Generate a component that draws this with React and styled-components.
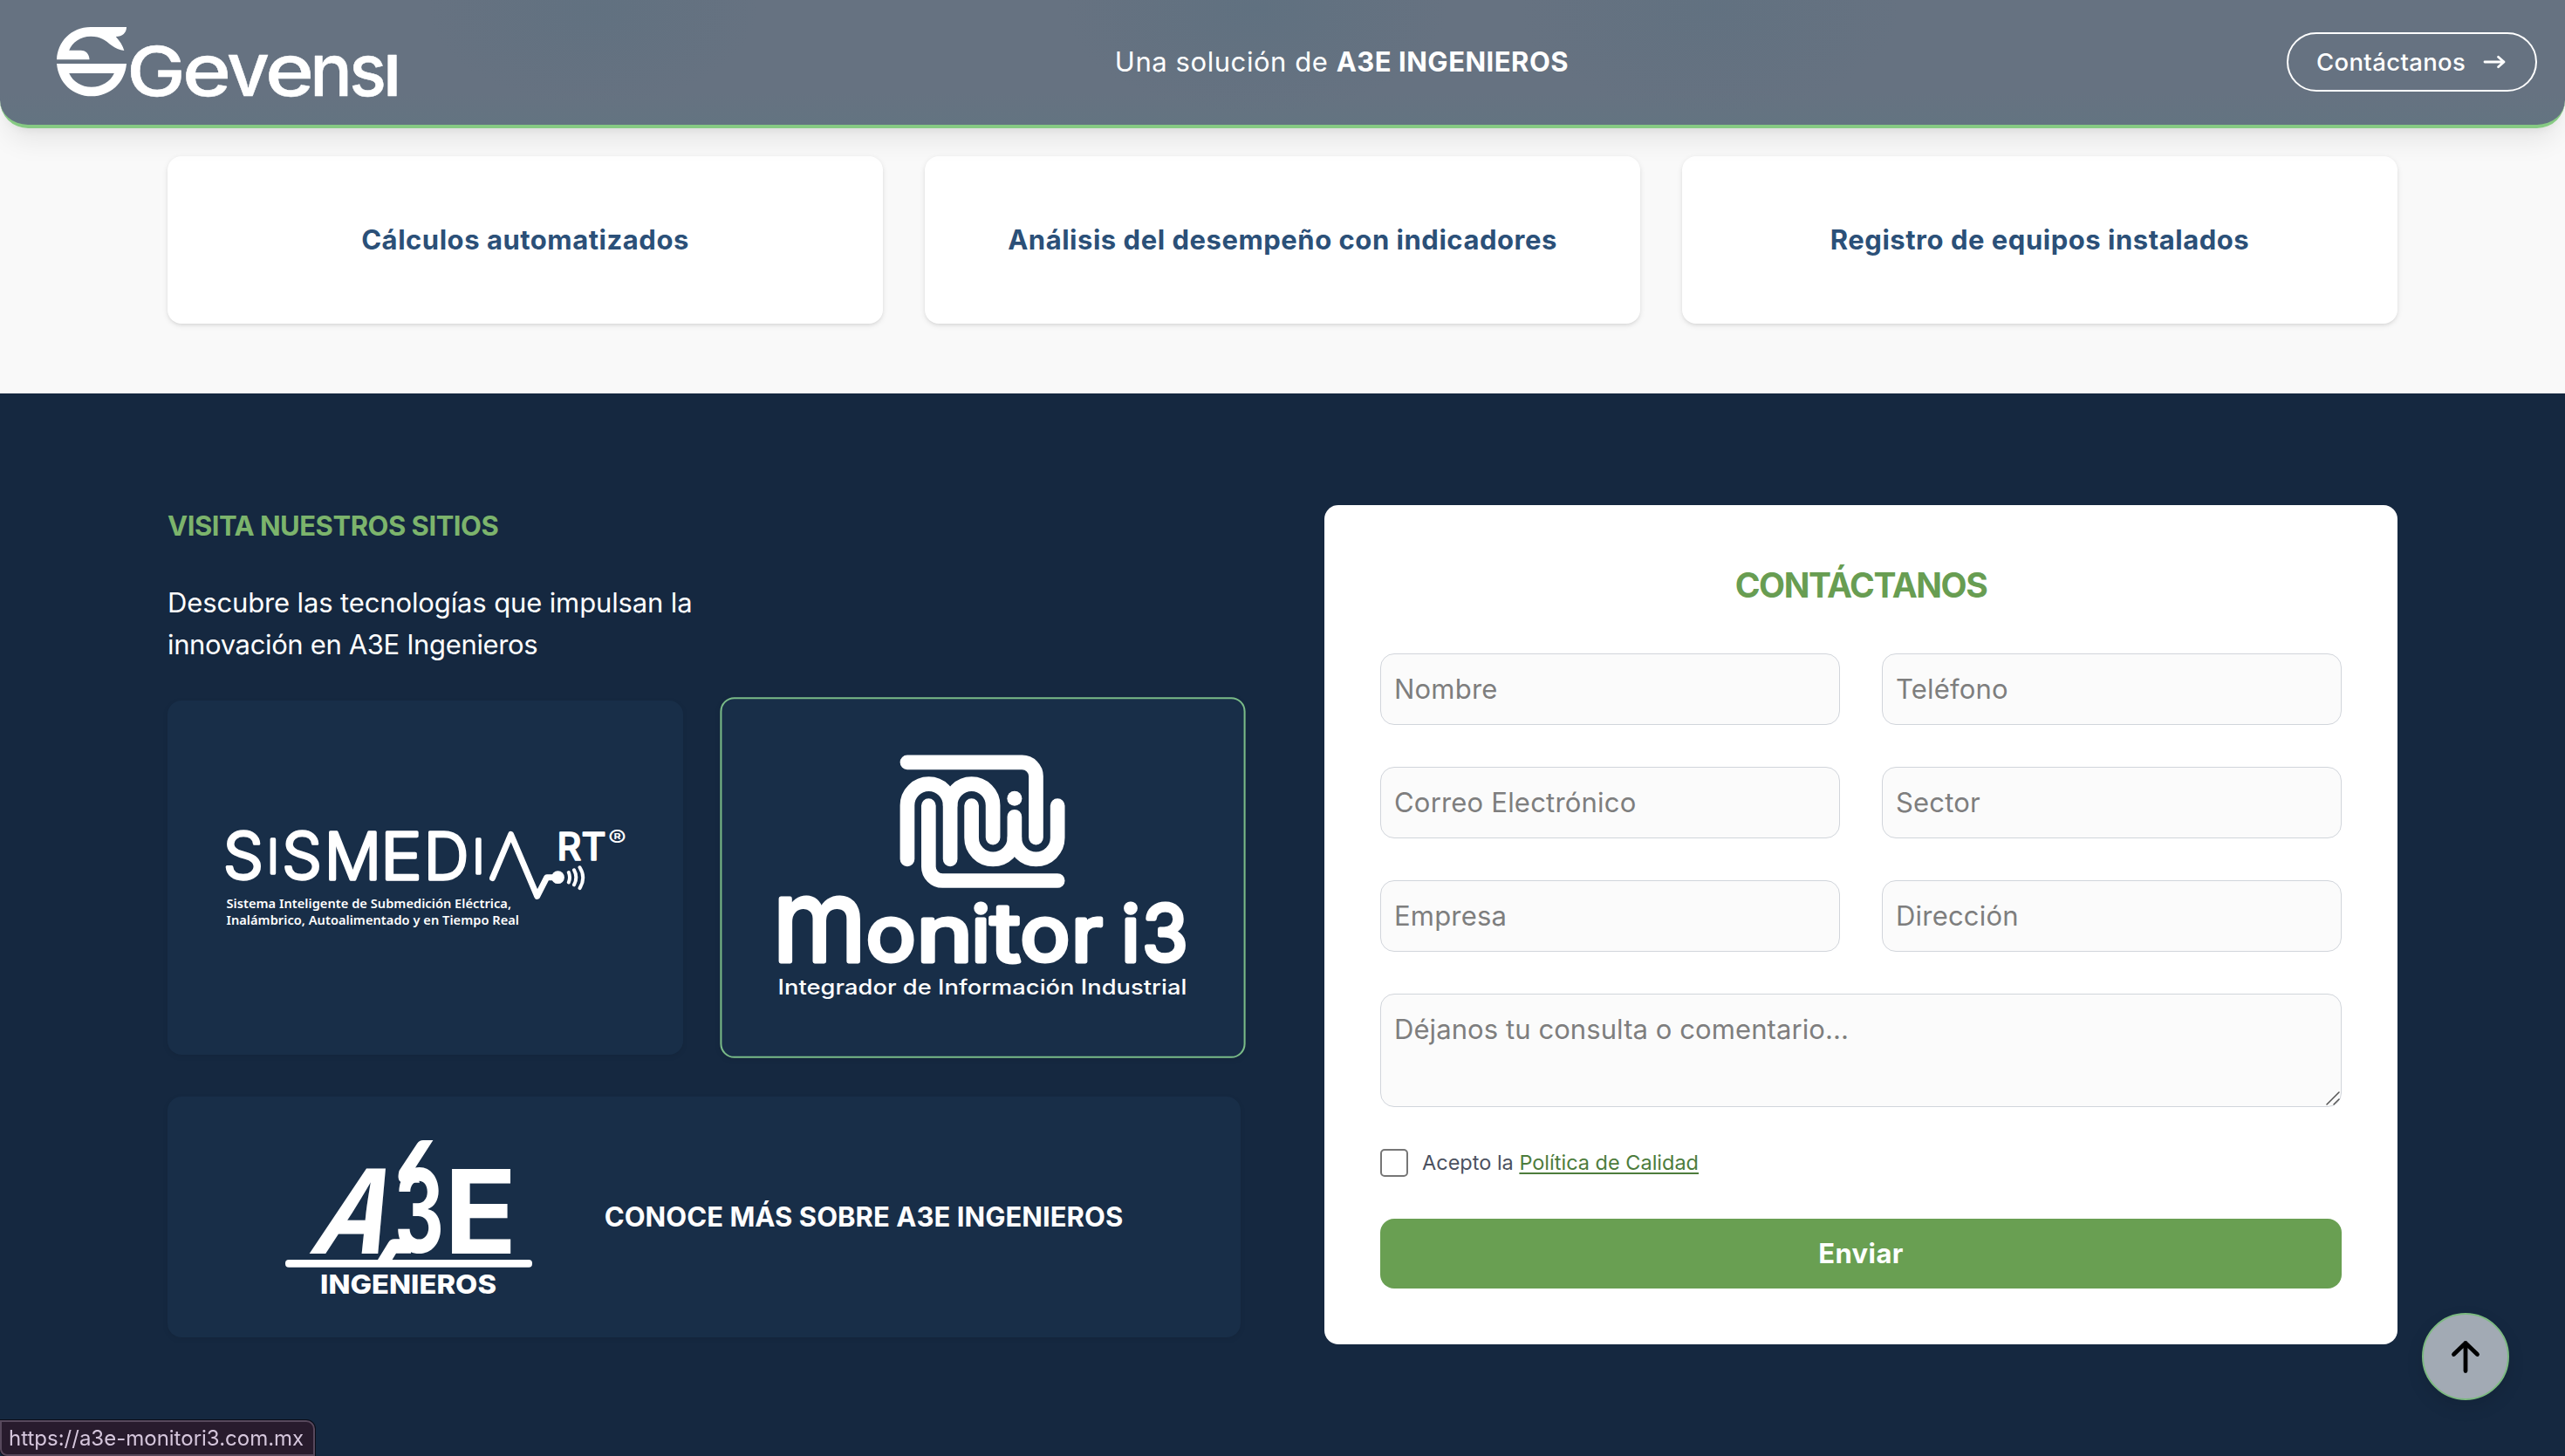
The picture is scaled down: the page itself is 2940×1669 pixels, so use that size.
import React from 'react';
import styled, { createGlobalStyle } from 'styled-components';

const GlobalStyle = createGlobalStyle`
  * { box-sizing: border-box; }
  body {
    margin: 0;
    background: #f9f9f9;
    font-family: Inter, 'DM Sans', sans-serif;
    font-size: 31px;
    line-height: 48px;
  }
  h2, h3, p { margin: 0; }
`;

const Page = styled.div`
  display: flex;
  flex-direction: column;
  height: 1669px;
  overflow: hidden;
`;

const Header = styled.header`
  position: relative;
  z-index: 2;
  flex: none;
  display: flex;
  align-items: center;
  justify-content: space-between;
  height: 147px;
  padding: 0 32px 1px 65px;
  color: #fff;
  background:
    radial-gradient(ellipse 190px 110px at 680px 10px, rgba(84, 110, 126, 0.28), transparent),
    radial-gradient(ellipse 220px 120px at 1440px 10px, rgba(84, 110, 126, 0.35), transparent),
    radial-gradient(ellipse 220px 120px at 1960px 10px, rgba(84, 110, 126, 0.25), transparent),
    linear-gradient(#667281 75%, #637481);
  border-bottom: 4px solid #86ca83;
  border-radius: 0 0 32px 32px;
  box-shadow: 0 20px 30px -6px rgba(0, 0, 0, 0.08), 0 8px 12px -8px rgba(0, 0, 0, 0.08);
`;

const Logo = styled.svg`
  display: block;
  flex: none;
  overflow: visible;
  fill: #fff;
  font-family: Inter, sans-serif;
`;

const Tagline = styled.p`
  white-space: pre;
  letter-spacing: 0.56px;
  strong { letter-spacing: 0.5px; font-weight: 700; }
`;

const ContactButton = styled.a`
  display: flex;
  align-items: center;
  gap: 20px;
  width: 287px;
  height: 68px;
  padding-left: 32px;
  border: 2px solid #fff;
  border-radius: 34px;
  font-size: 27.5px;
  font-weight: 500;
  letter-spacing: 0.35px;
`;

const Features = styled.section`
  flex: none;
  display: grid;
  grid-template-columns: repeat(3, 1fr);
  gap: 48px;
  padding: 32px 192px 80px;
`;

const FeatureCard = styled.div`
  display: flex;
  align-items: center;
  justify-content: center;
  height: 192px;
  border-radius: 16px;
  background: #fff;
  color: #2b5078;
  font-weight: 700;
  letter-spacing: 0.53px;
  box-shadow: 0 2px 6px rgba(0, 0, 0, 0.1), 0 2px 4px -2px rgba(0, 0, 0, 0.1);
`;

const Footer = styled.section`
  flex: 1;
  display: grid;
  grid-template-columns: 1fr 1fr;
  align-items: start;
  gap: 96px;
  padding: 128px 192px;
  background: #152840;
`;

const Sites = styled.div`
  display: flex;
  flex-direction: column;
  gap: 40px;
  color: #fff;
`;

const SitesTitle = styled.h3`
  color: #7cb46c;
  font-size: 31px;
  font-weight: 700;
  letter-spacing: -0.48px;
`;

const SitesText = styled.p`
  display: flex;
  flex-direction: column;
`;

const SitesLine = styled.span`
  letter-spacing: ${(p) => p.$spacing}px;
`;

const SiteGrid = styled.div`
  display: grid;
  grid-template-columns: 1fr 1fr;
  grid-template-rows: 406px 276px;
  gap: 48px;
`;

const SiteCard = styled.a`
  display: flex;
  align-items: center;
  justify-content: center;
  gap: 83px;
  grid-column: ${(p) => (p.$wide ? 'span 2' : 'auto')};
  border: ${(p) => (p.$active ? '2px solid #7abb88' : '0')};
  border-radius: 16px;
  background: #182e48;
  transform: ${(p) => (p.$active ? 'scale(1.019)' : 'none')};
  box-shadow: 0 2px 6px rgba(0, 0, 0, 0.08);
  font-weight: 700;
  letter-spacing: 0.04px;
`;

const Form = styled.form`
  display: flex;
  flex-direction: column;
  gap: 48px;
  padding: 64px;
  border-radius: 16px;
  background: #fff;
`;

const FormTitle = styled.h2`
  margin-bottom: 2px;
  color: #689d52;
  font-size: 39px;
  line-height: 56px;
  font-weight: 700;
  letter-spacing: -1.45px;
  text-align: center;
`;

const FieldGrid = styled.div`
  display: grid;
  grid-template-columns: 1fr 1fr;
  gap: 48px;
`;

const Input = styled.input`
  width: 100%;
  height: 82px;
  padding: 0 15px 2px;
  border: 1px solid #d1d5db;
  border-radius: 16px;
  background: #fbfbfb;
  font: inherit;
  letter-spacing: 0.2px;
  &::placeholder { color: #7e7e7e; opacity: 1; }
`;

const AreaWrap = styled.div`
  position: relative;
  height: 130px;
`;

const TextArea = styled.textarea`
  display: block;
  width: 100%;
  height: 130px;
  padding: 16px 15px 14px;
  border: 1px solid #d1d5db;
  border-radius: 16px;
  background: #fbfbfb;
  font: inherit;
  letter-spacing: 0.08px;
  resize: none;
  &::placeholder { color: #7e7e7e; opacity: 1; }
`;

const Grip = styled.svg`
  position: absolute;
  right: 2px;
  bottom: 2px;
`;

const Consent = styled.label`
  display: flex;
  align-items: center;
  gap: 16px;
  height: 32px;
  color: #4b5160;
  font-size: 23.5px;
  line-height: 32px;
  a {
    color: #4d7c3c;
    text-decoration: underline;
    text-decoration-thickness: 2px;
    text-underline-offset: 3px;
    text-decoration-skip-ink: none;
  }
`;

const CheckBox = styled.input`
  appearance: none;
  width: 32px;
  height: 32px;
  margin: 0;
  border: 2px solid #767676;
  border-radius: 5px;
  background: #fff;
`;

const Submit = styled.button`
  height: 80px;
  border: 0;
  border-radius: 16px;
  background: #699f52;
  color: #fff;
  font: inherit;
  font-weight: 700;
  letter-spacing: 0.4px;
`;

const TopButton = styled.button`
  position: fixed;
  z-index: 3;
  right: 64px;
  bottom: 64px;
  display: flex;
  align-items: center;
  justify-content: center;
  width: 100px;
  height: 100px;
  padding: 0;
  border: 2px solid #7cb980;
  border-radius: 50%;
  background: #a2aab4;
  box-shadow: 0 8px 20px rgba(0, 0, 0, 0.1);
`;

const LinkStatus = styled.div`
  position: fixed;
  z-index: 3;
  left: 0;
  bottom: 0;
  width: 361px;
  height: 41px;
  padding-left: 8px;
  border: 2px solid #57485c;
  border-radius: 0 10px 0 8px;
  background: #281b2d;
  box-shadow: 0 0 0 1px #0a0d18;
  color: #d5c6dc;
  font-size: 24px;
  line-height: 37px;
`;

/* Left bearing, ink width and advance of each wordmark glyph, in em. */
const METRICS = {
  G: [0.055, 0.645, 0.755], e: [0.045, 0.5, 0.59], v: [0.015, 0.55, 0.58], n: [0.075, 0.45, 0.6],
  s: [0.04, 0.47, 0.55], 'ı': [0.08, 0.1, 0.26], o: [0.045, 0.52, 0.61], i: [0.07, 0.12, 0.27],
  t: [0.02, 0.33, 0.37], r: [0.075, 0.3, 0.39], 3: [0.045, 0.55, 0.64], m: [0.075, 0.74, 0.89],
  S: [0.05, 0.55, 0.65], M: [0.08, 0.73, 0.89], E: [0.085, 0.48, 0.61], D: [0.085, 0.61, 0.74],
  I: [0.09, 0.1, 0.28],
};

/* Each glyph is [character, left edge, right edge, baseline, font size]. */
const Word = ({ glyphs, stroke = 0, ...rest }) => (
  <text stroke="#fff" strokeWidth={stroke} strokeLinejoin="round" {...rest}>
    {glyphs.map(([ch, left, right, y, size], i) => {
      const [lsb, ink, adv] = METRICS[ch];
      const scale = (right - left - stroke) / (ink * size);
      return (
        <tspan
          key={i}
          x={left + stroke / 2 - lsb * size * scale}
          y={y}
          fontSize={size}
          textLength={adv * size * scale}
          lengthAdjust="spacingAndGlyphs"
        >
          {ch}
        </tspan>
      );
    })}
  </text>
);

const GevensiLogo = () => (
  <Logo width="390" height="80" viewBox="65 31 390 80" role="img" aria-label="Gevensi">
    <g transform="scale(0.38265 0.33333)">
      <path d="M170 205 C172 145 212 93 272 93 H379 C379 112 367 126 347 126 C358 140 368 156 372 174 C358 173 345 166 335 157 C315 138 302 125 272 125 C240 125 216 146 207 173 H242 C258 173 268 187 268 205 Z" />
      <path fillRule="evenodd" d="M170 219 H379 C374 285 330 331 274 331 C218 331 175 285 170 219 Z M207 252 C219 282 244 299 274 299 C304 299 330 282 342 252 Z" />
    </g>
    <Word
      fontWeight="500"
      stroke={0.5}
      glyphs={[
        ['G', 150, 208, 109.5, 78], ['e', 213, 261, 109.5, 84], ['v', 261, 308, 109.8, 86], ['e', 308, 356, 109.5, 84],
        ['n', 361, 398, 109.8, 84], ['s', 403, 440, 109.5, 84], ['ı', 445, 454, 109.8, 86],
      ]}
    />
  </Logo>
);

const SismediaLogo = () => (
  <Logo width="461" height="112" viewBox="257 950 461 112">
    <Word
      fontWeight="300"
      stroke={3.4}
      glyphs={[
        ['S', 257.5, 300, 1007, 73], ['I', 309, 317, 1000.5, 54], ['S', 325, 367, 1007, 73], ['M', 376, 433, 1007.5, 74],
        ['E', 441, 482, 1007.5, 74], ['D', 490, 536, 1007.5, 74], ['I', 544.5, 552.5, 1000.5, 54],
      ]}
    />
    <g fill="none" stroke="#fff" strokeLinecap="round" strokeLinejoin="round">
      <polyline strokeWidth="7" points="564.5,1006.5 585.6,956.5 615.7,1027.3 626.8,1005.7 638,1005.7" />
      <path strokeWidth="4" d="M651.8 1000 q2.4 5.6 0 11.4 M658 997.3 q4.6 8.4 0 17 M664.5 994.3 q7.4 12 0 23.8" />
    </g>
    <circle cx="639.5" cy="1005.7" r="7.4" />
    <text x="638.5" y="986" fontSize="44" fontWeight="500" stroke="#fff" strokeWidth="1.6" strokeLinejoin="round" textLength="56" lengthAdjust="spacingAndGlyphs">RT</text>
    <text x="697" y="970.5" fontSize="27" fontWeight="400" textLength="21" lengthAdjust="spacingAndGlyphs">®</text>
    <g fontFamily="'Noto Sans', sans-serif" fontSize="15" fontWeight="600">
      <text x="259.5" y="1041" textLength="326.5" lengthAdjust="spacingAndGlyphs">Sistema Inteligente de Submedición Eléctrica,</text>
      <text x="259.5" y="1059.7" textLength="335.5" lengthAdjust="spacingAndGlyphs">Inalámbrico, Autoalimentado y en Tiempo Real</text>
    </g>
  </Logo>
);

const MonitorLogo = () => (
  <Logo width="461" height="278" viewBox="892 865 470 283">
    <g fill="none" stroke="#fff" strokeWidth="16.7" strokeLinecap="round">
      <path d="M1040.4 874.3 H1172 A16 16 0 0 1 1188 890.3 V960.6" />
      <path d="M1040.4 985.3 V923.7 A24.6 24.6 0 0 1 1089.6 923.7 V985.3" />
      <path d="M1089.6 923.7 A24.5 24.6 0 0 1 1138.6 923.7 V960.6" />
      <path d="M1114.1 924 V960.8 A24.6 24.6 0 0 0 1163.4 960.8 V936.7" />
      <path d="M1163.4 960.8 A24.6 24.6 0 0 0 1212.7 960.8 V924" />
      <path d="M1064.8 924 V994 A16 16 0 0 0 1080.8 1010 H1212.7" />
    </g>
    <circle cx="1163.4" cy="915.7" r="8.5" />
    <Word
      fontWeight="400"
      stroke={5}
      glyphs={[
        ['m', 892.5, 987, 1102.2, 132], ['o', 995, 1048.5, 1101.5, 86], ['n', 1056.5, 1110, 1102.2, 88], ['i', 1117, 1131.5, 1102.2, 88],
        ['t', 1135, 1171, 1102.2, 92], ['o', 1171.8, 1225.3, 1101.5, 86], ['r', 1233, 1265.5, 1102.2, 88],
      ]}
    />
    <Word
      fontWeight="400"
      stroke={5}
      glyphs={[['i', 1289, 1303.5, 1102.2, 88], ['3', 1311, 1361, 1101.5, 88]]}
    />
    <text x="892" y="1140.7" fontSize="24" fontWeight="500" textLength="469" lengthAdjust="spacingAndGlyphs">Integrador de Información Industrial</text>
  </Logo>
);

const A3ELogo = () => (
  <Logo width="283" height="177" viewBox="326 1307 283 177">
    <text transform="translate(351 1436.7) skewX(-21)" fontSize="134" fontWeight="700" textLength="84" lengthAdjust="spacingAndGlyphs">A</text>
    <Word fontWeight="700" glyphs={[['3', 455, 504, 1436, 133], ['E', 519.6, 585.4, 1436.7, 134]]} />
    <path d="M495.4 1307 H484 Q479.5 1307 477 1311 L456.5 1342 Q453 1355.7 462 1355.7 H480 L474.6 1339.3 Z" />
    <path d="M431.4 1445 L444 1424.5 Q446.5 1420.3 451 1420.3 H470 V1436.7 H453 L448 1445 Z" />
    <rect x="326" y="1444" width="283" height="8.8" rx="4" />
    <text x="366" y="1483" fontSize="30" fontWeight="800" textLength="202" lengthAdjust="spacingAndGlyphs">INGENIEROS</text>
  </Logo>
);

const features = [
  'Cálculos automatizados',
  'Análisis del desempeño con indicadores',
  'Registro de equipos instalados',
];

const fields = ['Nombre', 'Teléfono', 'Correo Electrónico', 'Sector', 'Empresa', 'Dirección'];

export default function App() {
  return (
    <Page>
      <GlobalStyle />
      <Header>
        <GevensiLogo />
        <Tagline>Una solución de <strong>A3E INGENIEROS</strong></Tagline>
        <ContactButton>
          Contáctanos
          <svg width="26" height="16" viewBox="0 0 26 16" fill="none" stroke="#fff" strokeWidth="2.8" strokeLinecap="round" strokeLinejoin="round">
            <path d="M2 8 H24 M17.5 2.3 L24 8 L17.5 13.7" />
          </svg>
        </ContactButton>
      </Header>

      <Features>
        {features.map((f) => <FeatureCard key={f}>{f}</FeatureCard>)}
      </Features>

      <Footer>
        <Sites>
          <SitesTitle>VISITA NUESTROS SITIOS</SitesTitle>
          <SitesText>
            <SitesLine $spacing={-0.13}>Descubre las tecnologías que impulsan la</SitesLine>
            <SitesLine $spacing={-0.36}>innovación en A3E Ingenieros</SitesLine>
          </SitesText>
          <SiteGrid>
            <SiteCard><SismediaLogo /></SiteCard>
            <SiteCard $active><MonitorLogo /></SiteCard>
            <SiteCard $wide><A3ELogo />CONOCE MÁS SOBRE A3E INGENIEROS</SiteCard>
          </SiteGrid>
        </Sites>

        <Form>
          <FormTitle>CONTÁCTANOS</FormTitle>
          <FieldGrid>
            {fields.map((f) => <Input key={f} placeholder={f} />)}
          </FieldGrid>
          <AreaWrap>
            <TextArea placeholder="Déjanos tu consulta o comentario..." />
            <Grip width="16" height="16" viewBox="0 0 16 16" stroke="#555" strokeWidth="1.5" strokeLinecap="round">
              <path d="M1 15 L15 1 M9 15 L15 9" />
            </Grip>
          </AreaWrap>
          <Consent>
            <CheckBox type="checkbox" />
            <span>Acepto la <a>Política de Calidad</a></span>
          </Consent>
          <Submit type="button">Enviar</Submit>
        </Form>
      </Footer>

      <TopButton type="button" aria-label="Subir">
        <svg width="36" height="38" viewBox="0 0 36 38" fill="none" stroke="#000" strokeWidth="4.8" strokeLinecap="round" strokeLinejoin="round">
          <path d="M18 35.5 V3.5 M4.5 16.5 L18 3.5 L31.5 16.5" />
        </svg>
      </TopButton>
      <LinkStatus>https://a3e-monitori3.com.mx</LinkStatus>
    </Page>
  );
}
